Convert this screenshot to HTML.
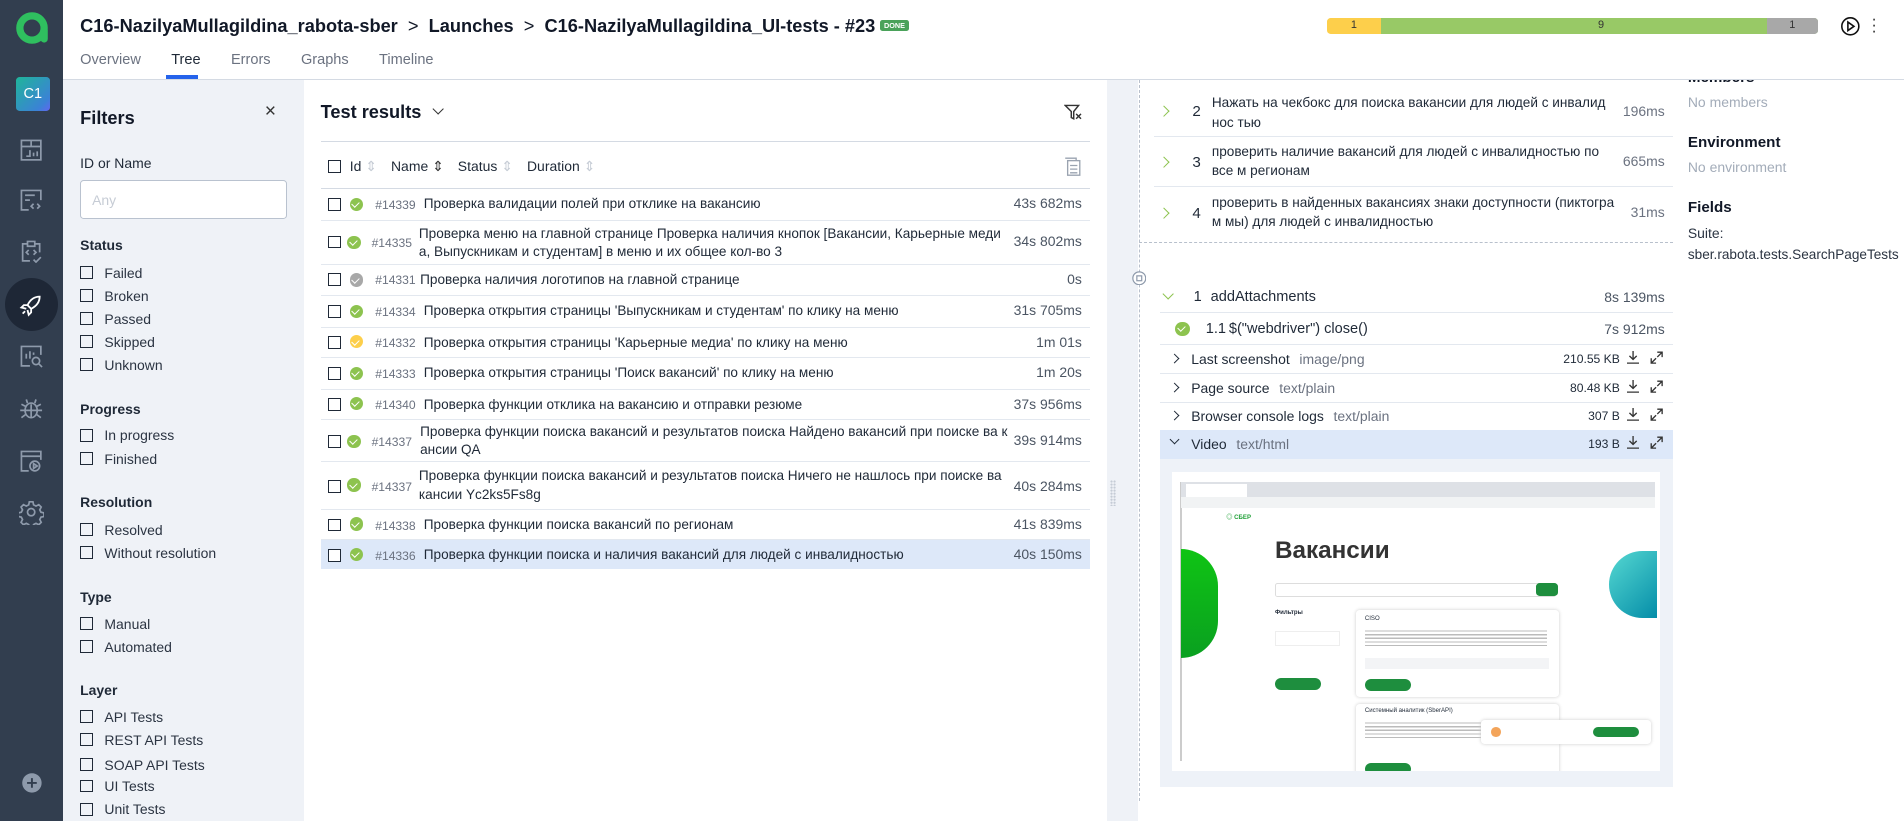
<!DOCTYPE html>
<html><head><meta charset="utf-8">
<style>
html,body{margin:0;padding:0;overflow:hidden;background:#fff}
body{width:1904px;height:821px}
#r{zoom:1.21429;position:relative;width:1568px;height:676px;font-family:"Liberation Sans","Noto Sans CJK SC",sans-serif;color:#1f2937;font-size:12px;overflow:hidden}
.a{position:absolute}
.sb{left:0;top:0;width:52px;height:676px;background:#323e4f}
.ic{position:absolute;left:16px;width:20px;height:20px}
.cb{position:absolute;width:9px;height:9px;border:1.2px solid #1f2937;background:#fff}
.fl{position:absolute;left:66px;font-size:11.5px;color:#2b3442}
.fl .cb{left:0;top:1px;background:transparent}
.fl span{margin-left:20px}
.fh{position:absolute;left:66px;font-size:11.5px;font-weight:bold;color:#1f2937}
.row{position:absolute;left:264px;width:634px;border-bottom:1px solid #e3e8ef}
.row .cb{left:6px}
.ok{position:absolute;width:11px;height:11px;border-radius:50%;background:#8dc34f}
.ok:after{content:"";position:absolute;left:3px;top:2px;width:3px;height:5px;border:solid #fff;border-width:0 1.3px 1.3px 0;transform:rotate(45deg)}
.id{position:absolute;font-size:10px;color:#6b7280}
.nm{position:absolute;font-size:11.2px;color:#1f2937;line-height:15px;word-break:break-all}
.du{position:absolute;right:7px;font-size:11.5px;color:#4b5563}
.st{position:absolute;left:950px;width:428px;border-bottom:1px solid #e3e8ef}
.chev{position:absolute;width:6px;height:6px;border:solid #8dc34f;border-width:0 1.3px 1.3px 0;transform:rotate(-45deg)}
.at{position:absolute;left:955px;width:423px;height:23px;border-bottom:1px solid #e3e8ef;font-size:11.5px}
.at .c{position:absolute;left:9px;top:8px;width:5px;height:5px;border:solid #1f2937;border-width:0 1.3px 1.3px 0;transform:rotate(-45deg)}
.at .t{position:absolute;left:26px;top:5px}
.at .g{color:#6b7280;margin-left:8px}
.at .s{position:absolute;right:44px;top:6px;font-size:10px}
.dl{position:absolute;right:28px;top:5px;width:10px;height:11px}
.ex{position:absolute;right:8px;top:5px;width:11px;height:11px}
</style></head><body><div id="r">
<!-- sidebar -->
<div class="a sb"></div>
<svg class="a" style="left:12px;top:9px" width="28" height="28" viewBox="0 0 28 28"><circle cx="14" cy="14" r="10" fill="none" stroke="#2fbf5f" stroke-width="6"/><rect x="21" y="13" width="6" height="13" rx="3" fill="#2fbf5f"/></svg>
<div class="a" style="left:13px;top:63px;width:28px;height:28px;border-radius:3px;background:linear-gradient(135deg,#1fb59a,#3b82d6 80%,#6366f1);color:#fff;font-size:12px;text-align:center;line-height:28px">C1</div>
<svg class="ic" style="top:114px" viewBox="0 0 20 20" fill="none" stroke="#8e9aab" stroke-width="1.4"><rect x="2" y="2" width="16" height="16"/><path d="M2 7h16M10 2v5M6 15h3v-5M12 15v-3M15 15v-4"/></svg>
<svg class="ic" style="top:155px" viewBox="0 0 20 20" fill="none" stroke="#8e9aab" stroke-width="1.4"><path d="M8 18H2V2h16v8M5 6h8M5 10h4M12 13l-2 2 2 2M15 13l2 2-2 2"/></svg>
<svg class="ic" style="top:197px" viewBox="0 0 20 20" fill="none" stroke="#8e9aab" stroke-width="1.4"><path d="M7 4H3v14h6M13 4h4v7M7 2h6v4H7zM8 9l-2 2 2 2M12 9l2 2-2 2M12 17l2 2 4-4"/></svg>
<div class="a" style="left:4px;top:229px;width:44px;height:44px;border-radius:50%;background:#1e2736"></div>
<svg class="ic" style="top:241px" viewBox="0 0 20 20" fill="none" stroke="#fff" stroke-width="1.5"><path d="M17 3c-5 0-8 3-10 7l3 3c4-2 7-5 7-10zM7 10H4l-2 2 4 1M10 13v3l-2 2-1-4M5 15l-2 2"/></svg>
<svg class="ic" style="top:283px" viewBox="0 0 20 20" fill="none" stroke="#8e9aab" stroke-width="1.4"><path d="M9 18H2V2h16v7M6 12V8M9 12V6M12 9V7"/><circle cx="14" cy="14" r="3"/><path d="M16 16l3 3"/></svg>
<svg class="ic" style="top:327px" viewBox="0 0 20 20" fill="none" stroke="#8e9aab" stroke-width="1.4"><ellipse cx="10" cy="11" rx="5" ry="6"/><path d="M5 11h10M10 6v11M7 5l-1-3M13 5l1-3M1 11h4M15 11h4M2 6l4 2M18 6l-4 2M2 17l4-3M18 17l-4-3"/></svg>
<svg class="ic" style="top:370px" viewBox="0 0 20 20" fill="none" stroke="#8e9aab" stroke-width="1.4"><path d="M8 18H2V2h16v7M2 6h16"/><circle cx="13" cy="14" r="4"/><path d="M12 12v4l3-2z"/></svg>
<svg class="ic" style="top:412px" viewBox="0 0 20 20" fill="none" stroke="#8e9aab" stroke-width="1.4"><circle cx="10" cy="10" r="3"/><path d="M8.5 1.5h3l.5 2.5 2 1 2.3-1.2 2 2-1.2 2.3 1 2 2.5.5v3l-2.5.5-1 2 1.2 2.3-2 2-2.3-1.2-2 1-.5 2.5h-3l-.5-2.5-2-1-2.3 1.2-2-2 1.2-2.3-1-2-2.5-.5v-3l2.5-.5 1-2-1.2-2.3 2-2 2.3 1.2 2-1z"/></svg>
<svg class="a" style="left:17px;top:636px" width="18" height="18" viewBox="0 0 18 18"><circle cx="9" cy="9" r="8" fill="#8e9aab"/><path d="M9 5v8M5 9h8" stroke="#323e4f" stroke-width="1.6"/></svg>

<!-- header -->
<div class="a" style="left:66px;top:13px;font-size:15px;font-weight:bold;color:#111827;white-space:nowrap">C16-NazilyaMullagildina_rabota-sber &nbsp;<span style="font-weight:normal">&gt;</span>&nbsp; Launches &nbsp;<span style="font-weight:normal">&gt;</span>&nbsp; C16-NazilyaMullagildina_UI-tests - #23 <span style="display:inline-block;vertical-align:3px;background:#4aa25a;color:#fff;font-size:6px;padding:1px 3px;border-radius:2px">DONE</span></div>
<div class="a" style="left:66px;top:43px;font-size:12px;color:#6b7280;white-space:nowrap"><span>Overview</span><span style="margin-left:25px;color:#1f2937">Tree</span><span style="margin-left:25px">Errors</span><span style="margin-left:25px">Graphs</span><span style="margin-left:25px">Timeline</span></div>
<div class="a" style="left:137px;top:62px;width:26px;height:3px;background:#2563eb"></div>
<div class="a" style="left:52px;top:65px;width:1516px;height:1px;background:#d4dae3"></div>
<div class="a" style="left:1093px;top:15px;width:404px;height:13px;border-radius:3px;overflow:hidden;font-size:9px;line-height:13px;text-align:center;color:#333">
<div class="a" style="left:0;width:44px;height:13px;background:#fdcf4b">1</div>
<div class="a" style="left:44px;width:363px;height:13px;background:#98c966">9</div>
<div class="a" style="left:362px;width:42px;height:13px;background:#a8a8a8">1</div></div>
<svg class="a" style="left:1515px;top:13px" width="17" height="17" viewBox="0 0 17 17" fill="none" stroke="#111" stroke-width="1.3"><circle cx="8.5" cy="8.5" r="7"/><path d="M6.5 5v7l5-3.5z"/></svg>
<div class="a" style="left:1541px;top:13px;font-size:14px;line-height:5px;color:#333">·<br>·<br>·</div>

<!-- filters -->
<div class="a" style="left:52px;top:66px;width:198px;height:610px;background:#eff2f7"></div>
<div class="a" style="left:66px;top:89px;font-size:15px;font-weight:bold;color:#111827">Filters</div>
<div class="a" style="left:218px;top:82px;font-size:16px;color:#333">×</div>
<div class="a" style="left:66px;top:128px;font-size:11.5px">ID or Name</div>
<div class="a" style="left:66px;top:148px;width:169px;height:31px;background:#fff;border:1px solid #b9c2cf;border-radius:3px"><span style="position:absolute;left:9px;top:9px;color:#c6ccd5;font-size:11.5px">Any</span></div>
<div class="fh" style="top:195px">Status</div>
<div class="fl" style="top:218px"><i class="cb"></i><span>Failed</span></div>
<div class="fl" style="top:237px"><i class="cb"></i><span>Broken</span></div>
<div class="fl" style="top:256px"><i class="cb"></i><span>Passed</span></div>
<div class="fl" style="top:275px"><i class="cb"></i><span>Skipped</span></div>
<div class="fl" style="top:294px"><i class="cb"></i><span>Unknown</span></div>
<div class="fh" style="top:330px">Progress</div>
<div class="fl" style="top:352px"><i class="cb"></i><span>In progress</span></div>
<div class="fl" style="top:371px"><i class="cb"></i><span>Finished</span></div>
<div class="fh" style="top:407px">Resolution</div>
<div class="fl" style="top:430px"><i class="cb"></i><span>Resolved</span></div>
<div class="fl" style="top:449px"><i class="cb"></i><span>Without resolution</span></div>
<div class="fh" style="top:485px">Type</div>
<div class="fl" style="top:507px"><i class="cb"></i><span>Manual</span></div>
<div class="fl" style="top:526px"><i class="cb"></i><span>Automated</span></div>
<div class="fh" style="top:562px">Layer</div>
<div class="fl" style="top:584px"><i class="cb"></i><span>API Tests</span></div>
<div class="fl" style="top:603px"><i class="cb"></i><span>REST API Tests</span></div>
<div class="fl" style="top:623px"><i class="cb"></i><span>SOAP API Tests</span></div>
<div class="fl" style="top:641px"><i class="cb"></i><span>UI Tests</span></div>
<div class="fl" style="top:660px"><i class="cb"></i><span>Unit Tests</span></div>

<!-- test results -->
<div class="a" style="left:264px;top:84px;font-size:15px;font-weight:bold;color:#111827">Test results <span style="display:inline-block;width:6px;height:6px;border:solid #333;border-width:0 1.2px 1.2px 0;transform:rotate(45deg);margin-left:6px;vertical-align:4px"></span></div>
<svg class="a" style="left:876px;top:85px" width="15" height="15" viewBox="0 0 15 15" fill="none" stroke="#333" stroke-width="1.2"><path d="M1 2h11L8 7v6L6 12V7zM10 9l4 4M14 9l-4 4"/></svg>
<div class="a" style="left:264px;top:116px;width:634px;height:1px;background:#d4dae3"></div>
<div class="a" style="left:264px;top:130px;width:634px;font-size:11.5px;white-space:nowrap"><i class="cb" style="left:6px;top:2px"></i><span class="a" style="left:24px">Id <span style="color:#c6ccd5">⇕</span></span><span class="a" style="left:58px">Name <span style="color:#333">⇕</span></span><span class="a" style="left:113px">Status <span style="color:#c6ccd5">⇕</span></span><span class="a" style="left:170px">Duration <span style="color:#c6ccd5">⇕</span></span></div>
<svg class="a" style="left:876px;top:129px" width="14" height="16" viewBox="0 0 14 16" fill="none" stroke="#9aa3b0" stroke-width="1.1"><rect x="3" y="3" width="10" height="12"/><path d="M1 1h9v2M5 7h6M5 10h6M5 13h6"/></svg>
<div class="a" style="left:264px;top:155px;width:634px;height:1px;background:#d4dae3"></div>

<div class="row" style="top:156px;height:25px"><i class="cb" style="top:7px"></i><i class="ok" style="left:24px;top:7px"></i><span class="id" style="left:45px;top:7px">#14339</span><span class="nm" style="left:85px;top:5px">Проверка валидации полей при отклике на вакансию</span><span class="du" style="top:5px">43s 682ms</span></div>
<div class="row" style="top:182px;height:35px"><i class="cb" style="top:12px"></i><i class="ok" style="left:22px;top:12px"></i><span class="id" style="left:42px;top:12px">#14335</span><span class="nm" style="left:81px;top:3px;width:486px">Проверка меню на главной странице Проверка наличия кнопок [Вакансии, Карьерные меди а, Выпускникам и студентам] в меню и их общее кол-во 3</span><span class="du" style="top:10px">34s 802ms</span></div>
<div class="row" style="top:218px;height:25px"><i class="cb" style="top:7px"></i><i class="ok" style="left:24px;top:7px;background:#a8a8a8"></i><span class="id" style="left:45px;top:7px">#14331</span><span class="nm" style="left:82px;top:5px">Проверка наличия логотипов на главной странице</span><span class="du" style="top:5px">0s</span></div>
<div class="row" style="top:244px;height:25px"><i class="cb" style="top:7px"></i><i class="ok" style="left:24px;top:7px"></i><span class="id" style="left:45px;top:7px">#14334</span><span class="nm" style="left:85px;top:5px">Проверка открытия страницы 'Выпускникам и студентам' по клику на меню</span><span class="du" style="top:5px">31s 705ms</span></div>
<div class="row" style="top:270px;height:24px"><i class="cb" style="top:7px"></i><i class="ok" style="left:24px;top:6px;background:#fdcf4b"></i><span class="id" style="left:45px;top:7px">#14332</span><span class="nm" style="left:85px;top:5px">Проверка открытия страницы 'Карьерные медиа' по клику на меню</span><span class="du" style="top:5px">1m 01s</span></div>
<div class="row" style="top:295px;height:25px"><i class="cb" style="top:7px"></i><i class="ok" style="left:24px;top:7px"></i><span class="id" style="left:45px;top:7px">#14333</span><span class="nm" style="left:85px;top:5px">Проверка открытия страницы 'Поиск вакансий' по клику на меню</span><span class="du" style="top:5px">1m 20s</span></div>
<div class="row" style="top:321px;height:24px"><i class="cb" style="top:7px"></i><i class="ok" style="left:24px;top:6px"></i><span class="id" style="left:45px;top:7px">#14340</span><span class="nm" style="left:85px;top:5px">Проверка функции отклика на вакансию и отправки резюме</span><span class="du" style="top:5px">37s 956ms</span></div>
<div class="row" style="top:346px;height:34px"><i class="cb" style="top:12px"></i><i class="ok" style="left:22px;top:12px"></i><span class="id" style="left:42px;top:12px">#14337</span><span class="nm" style="left:82px;top:2px;width:484px">Проверка функции поиска вакансий и результатов поиска Найдено вакансий при поиске ва кансии QA</span><span class="du" style="top:10px">39s 914ms</span></div>
<div class="row" style="top:381px;height:38px"><i class="cb" style="top:14px"></i><i class="ok" style="left:22px;top:13px"></i><span class="id" style="left:42px;top:14px">#14337</span><span class="nm" style="left:81px;top:4px;width:486px">Проверка функции поиска вакансий и результатов поиска Ничего не нашлось при поиске ва кансии Yc2ks5Fs8g</span><span class="du" style="top:13px">40s 284ms</span></div>
<div class="row" style="top:420px;height:24px"><i class="cb" style="top:7px"></i><i class="ok" style="left:24px;top:6px"></i><span class="id" style="left:45px;top:7px">#14338</span><span class="nm" style="left:85px;top:5px">Проверка функции поиска вакансий по регионам</span><span class="du" style="top:5px">41s 839ms</span></div>
<div class="row" style="top:445px;height:24px;background:#dde8f9;border:0"><i class="cb" style="top:7px"></i><i class="ok" style="left:24px;top:6px"></i><span class="id" style="left:45px;top:7px">#14336</span><span class="nm" style="left:85px;top:5px">Проверка функции поиска и наличия вакансий для людей с инвалидностью</span><span class="du" style="top:5px">40s 150ms</span></div>

<!-- splitter -->
<div class="a" style="left:912px;top:66px;width:25px;height:610px;background:#eff2f7"></div>
<div class="a" style="left:914px;top:395px;width:5px;height:22px;background:radial-gradient(circle,#c5ccd6 0.8px,transparent 1px) 0 0/2.5px 2.5px"></div>

<!-- steps -->
<div class="a" style="left:938px;top:66px;height:594px;border-left:1px dashed #b8c0cc"></div>
<div class="a" style="left:938px;top:199px;width:440px;border-top:1px dashed #b8c0cc"></div>
<div class="st" style="top:72px;height:40px"><i class="chev" style="left:5px;top:16px"></i><span class="a" style="left:32px;top:13px;font-size:12.5px">2</span><span class="nm a" style="left:48px;top:5px;width:326px;line-height:16px">Нажать на чекбокс для поиска вакансии для людей с инвалиднос тью</span><span class="du" style="top:13px;color:#6b7280">196ms</span></div>
<div class="st" style="top:113px;height:40px"><i class="chev" style="left:5px;top:17px"></i><span class="a" style="left:32px;top:14px;font-size:12.5px">3</span><span class="nm a" style="left:48px;top:4px;width:326px;line-height:16px">проверить наличие вакансий для людей с инвалидностью по все м регионам</span><span class="du" style="top:13px;color:#6b7280">665ms</span></div>
<div class="st" style="top:154px;height:40px;border:0"><i class="chev" style="left:5px;top:18px"></i><span class="a" style="left:32px;top:15px;font-size:12.5px">4</span><span class="nm a" style="left:48px;top:5px;width:335px;line-height:16px">проверить в найденных вакансиях знаки доступности (пиктограм мы) для людей с инвалидностью</span><span class="du" style="top:14px;color:#6b7280">31ms</span></div>

<svg class="a" style="left:932px;top:223px" width="12" height="12" viewBox="0 0 12 12" fill="#fff" stroke="#8e9aab" stroke-width="1"><circle cx="6" cy="6" r="5.3"/><rect x="4" y="4" width="4" height="4"/></svg>
<div class="a" style="left:955px;top:233px;width:423px;height:24px;border-bottom:1px solid #e3e8ef"><i class="chev" style="left:4px;top:6px;transform:rotate(45deg)"></i><span class="a" style="left:28px;top:5px;font-size:12px">1</span><span class="a" style="left:42px;top:5px;font-size:12px">addAttachments</span><span class="du" style="top:5px;color:#4b5563">8s 139ms</span></div>
<div class="a" style="left:955px;top:258px;width:423px;height:25px;border-bottom:1px solid #e3e8ef"><i class="ok" style="left:13px;top:7px;width:12px;height:12px"></i><span class="a" style="left:38px;top:6px;font-size:12px">1.1</span><span class="a" style="left:57px;top:6px;font-size:12px">$("webdriver") close()</span><span class="du" style="top:6px;color:#4b5563">7s 912ms</span></div>
<div class="at" style="top:284px"><i class="c"></i><span class="t">Last screenshot<span class="g">image/png</span></span><span class="s">210.55 KB</span><svg class="dl" viewBox="0 0 10 11" fill="none" stroke="#333" stroke-width="1.1"><path d="M5 0v7M2 4l3 3 3-3M0 10h10"/></svg><svg class="ex" viewBox="0 0 11 11" fill="none" stroke="#333" stroke-width="1.1"><path d="M6 1h4v4M10 1L6 5M5 10H1V6M1 10l4-4"/></svg></div>
<div class="at" style="top:308px"><i class="c"></i><span class="t">Page source<span class="g">text/plain</span></span><span class="s">80.48 KB</span><svg class="dl" viewBox="0 0 10 11" fill="none" stroke="#333" stroke-width="1.1"><path d="M5 0v7M2 4l3 3 3-3M0 10h10"/></svg><svg class="ex" viewBox="0 0 11 11" fill="none" stroke="#333" stroke-width="1.1"><path d="M6 1h4v4M10 1L6 5M5 10H1V6M1 10l4-4"/></svg></div>
<div class="at" style="top:331px"><i class="c"></i><span class="t">Browser console logs<span class="g">text/plain</span></span><span class="s">307 B</span><svg class="dl" viewBox="0 0 10 11" fill="none" stroke="#333" stroke-width="1.1"><path d="M5 0v7M2 4l3 3 3-3M0 10h10"/></svg><svg class="ex" viewBox="0 0 11 11" fill="none" stroke="#333" stroke-width="1.1"><path d="M6 1h4v4M10 1L6 5M5 10H1V6M1 10l4-4"/></svg></div>
<div class="at" style="top:354px;background:#dde8f9;border:0;height:24px"><i class="c" style="transform:rotate(45deg);top:5px"></i><span class="t">Video<span class="g">text/html</span></span><span class="s">193 B</span><svg class="dl" viewBox="0 0 10 11" fill="none" stroke="#333" stroke-width="1.1"><path d="M5 0v7M2 4l3 3 3-3M0 10h10"/></svg><svg class="ex" viewBox="0 0 11 11" fill="none" stroke="#333" stroke-width="1.1"><path d="M6 1h4v4M10 1L6 5M5 10H1V6M1 10l4-4"/></svg></div>

<!-- video preview -->
<div class="a" style="left:955px;top:378px;width:423px;height:270px;background:#eef2f8"></div>
<div class="a" style="left:965px;top:389px;width:402px;height:246px;background:#fff;overflow:hidden">
 <div class="a" style="left:7px;top:8px;width:390px;height:230px;background:#fff;border-left:2px solid #ccc"></div>
 <div class="a" style="left:8px;top:8px;width:390px;height:12px;background:#dee1e6"></div>
 <div class="a" style="left:12px;top:10px;width:50px;height:10px;background:#fff"></div>
 <div class="a" style="left:8px;top:20px;width:390px;height:9px;background:#f1f3f4"></div>
 <div class="a" style="left:45px;top:33px;font-size:5px;color:#21a038;font-weight:bold">◎ СБЕР</div>
 <div class="a" style="left:85px;top:53px;font-size:20px;color:#333;font-weight:bold">Вакансии</div>
 <div class="a" style="left:8px;top:63px;width:30px;height:90px;border-radius:0 60px 60px 0;background:linear-gradient(#0fc414,#0aa020)"></div>
 <div class="a" style="left:360px;top:65px;width:40px;height:55px;border-radius:50px 0 0 50px;background:linear-gradient(135deg,#56d9d2,#058da8)"></div>
 <div class="a" style="left:85px;top:91px;width:230px;height:10px;border:1px solid #ddd;border-radius:2px"></div>
 <div class="a" style="left:300px;top:91px;width:18px;height:11px;background:#1e8e3e;border-radius:3px"></div>
 <div class="a" style="left:85px;top:113px;font-size:5px;font-weight:bold">Фильтры</div>
 <div class="a" style="left:85px;top:131px;width:52px;height:10px;border:1px solid #eee"></div>
 <div class="a" style="left:85px;top:169px;width:38px;height:10px;background:#1e8e3e;border-radius:6px"></div>
 <div class="a" style="left:152px;top:113px;width:167px;height:72px;background:#fff;box-shadow:0 0 3px #ccc;border-radius:3px"><span class="a" style="left:7px;top:5px;font-size:5px">CISO</span><div class="a" style="left:7px;top:15px;width:150px;height:15px;background:repeating-linear-gradient(#fff 0 2px,#bbb 2px 3px)"></div><div class="a" style="left:7px;top:40px;width:152px;height:9px;background:#f3f4f6"></div><div class="a" style="left:7px;top:57px;width:38px;height:10px;background:#1e8e3e;border-radius:6px"></div></div>
 <div class="a" style="left:152px;top:191px;width:167px;height:60px;background:#fff;box-shadow:0 0 3px #ccc;border-radius:3px"><span class="a" style="left:7px;top:3px;font-size:5px">Системный аналитик (SberAPI)</span><div class="a" style="left:7px;top:13px;width:150px;height:15px;background:repeating-linear-gradient(#fff 0 2px,#bbb 2px 3px)"></div><div class="a" style="left:7px;top:48px;width:38px;height:10px;background:#1e8e3e;border-radius:6px"></div></div>
 <div class="a" style="left:255px;top:204px;width:140px;height:20px;background:#fff;box-shadow:0 0 3px #ccc;border-radius:3px"><div class="a" style="left:8px;top:6px;width:8px;height:8px;border-radius:50%;background:#f3a45a"></div><div class="a" style="left:92px;top:6px;width:38px;height:8px;background:#1e8e3e;border-radius:5px"></div></div>
</div>

<!-- info -->
<div class="a" style="left:1380px;top:66px;width:188px;height:20px;overflow:hidden"><div class="a" style="left:10px;top:-9px;font-size:12.5px;font-weight:bold;color:#111827">Members</div></div>
<div class="a" style="left:1390px;top:77px;font-size:11.5px;color:#a3acb9">No members</div>
<div class="a" style="left:1390px;top:110px;font-size:12.5px;font-weight:bold;color:#111827">Environment</div>
<div class="a" style="left:1390px;top:131px;font-size:11.5px;color:#a3acb9">No environment</div>
<div class="a" style="left:1390px;top:164px;font-size:12.5px;font-weight:bold;color:#111827">Fields</div>
<div class="a" style="left:1390px;top:185px;font-size:11.5px;color:#2b3442">Suite:</div>
<div class="a" style="left:1390px;top:203px;font-size:11.2px;color:#2b3442">sber.rabota.tests.SearchPageTests</div>
</div></body></html>
